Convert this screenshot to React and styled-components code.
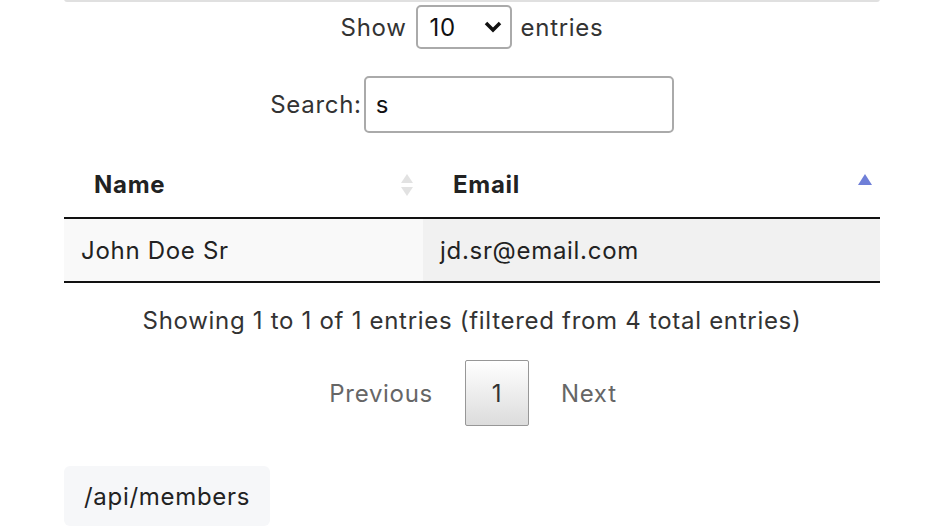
import styled, { createGlobalStyle } from "styled-components";

const GlobalStyle = createGlobalStyle`
  body {
    margin: 0;
    background: #fff;
    font-family: Inter, "Noto Sans", sans-serif;
    letter-spacing: 0.7px;
    color: #333;
  }
`;

const Page = styled.div`
  width: 816px;
  margin-left: 64px;
  display: flex;
  flex-direction: column;
`;

const PrevPanel = styled.div`
  height: 1px;
  border: 2px solid #e0e0e0;
  border-top: none;
  border-radius: 0 0 8px 8px;
  margin-top: -1px;
`;

const Row = styled.div`
  display: flex;
  justify-content: center;
  align-items: center;
  gap: ${(p) => p.gap || 8}px;
  font-size: 24px;
  color: #333;
`;

const Select = styled.div`
  width: 96px;
  height: 44px;
  box-sizing: border-box;
  border: 2px solid #aaa;
  border-radius: 5px;
  display: flex;
  align-items: center;
  justify-content: space-between;
  padding: 0 8px 0 12px;
  color: #111;
  font-size: 24px;
`;

const SearchInput = styled.div`
  width: 310px;
  height: 57px;
  box-sizing: border-box;
  border: 2px solid #aaa;
  border-radius: 5px;
  display: flex;
  align-items: center;
  padding: 0 10px;
  color: #111;
  font-size: 24px;
`;

const Table = styled.div`
  display: grid;
  grid-template-columns: 359px 457px;
  margin-top: 19px;
  border-bottom: 2px solid #111;
`;

const Head = styled.div`
  position: relative;
  height: 67px;
  box-sizing: border-box;
  padding: 0 30px;
  display: flex;
  align-items: center;
  font-size: 24px;
  font-weight: 700;
  color: #222;
  border-bottom: 2px solid #111;
`;

const SortIcon = styled.svg`
  position: absolute;
  right: ${(p) => p.right}px;
  top: 22px;
`;

const Cell = styled.div`
  height: 62px;
  display: flex;
  align-items: center;
  padding: 0 17px;
  font-size: 24px;
  color: #222;
  background: ${(p) => (p.sorted ? "#f1f1f1" : "#f9f9f9")};
`;

const Info = styled.div`
  text-align: center;
  font-size: 24px;
  color: #333;
  margin-top: 23px;
`;

const Pager = styled.div`
  display: flex;
  justify-content: center;
  align-items: center;
  gap: 32px;
  margin-top: 25px;
  margin-left: 2px;
`;

const PageLink = styled.span`
  font-size: 24px;
  color: #666;
`;

const PageButton = styled.div`
  width: 64px;
  height: 66px;
  box-sizing: border-box;
  border: 1.5px solid #979797;
  border-radius: 2px;
  background: linear-gradient(to bottom, #fff 0%, #dcdcdc 100%);
  display: flex;
  align-items: center;
  justify-content: center;
  font-size: 24px;
  color: #333;
`;

const Code = styled.div`
  align-self: flex-start;
  margin-top: 40px;
  background: #f6f7f9;
  border-radius: 6px;
  padding: 0 20px;
  height: 60px;
  display: flex;
  align-items: center;
  font-size: 24px;
  color: #222;
`;

function BothArrows() {
  return (
    <SortIcon right={10} width="12" height="24" viewBox="0 0 12 24">
      <polygon points="6,0 12,9 0,9" fill="#e2e2e2" />
      <polygon points="6,22 12,13 0,13" fill="#e2e2e2" />
    </SortIcon>
  );
}

function UpArrow() {
  return (
    <SortIcon right={8} width="14" height="11" viewBox="0 0 14 11">
      <polygon points="7,0 14,11 0,11" fill="#6f7fd8" />
    </SortIcon>
  );
}

export default function App() {
  return (
    <>
      <GlobalStyle />
      <Page>
        <PrevPanel />
        <Row gap={9} style={{ marginTop: 3 }}>
          <span>Show</span>
          <Select>
            <span>10</span>
            <svg width="18" height="12" viewBox="0 0 18 12">
              <polyline points="2,2 9,9 16,2" fill="none" stroke="#111" strokeWidth="3.5" />
            </svg>
          </Select>
          <span>entries</span>
        </Row>
        <Row gap={2} style={{ marginTop: 27 }}>
          <span>Search:</span>
          <SearchInput>s</SearchInput>
        </Row>
        <Table>
          <Head>
            Name
            <BothArrows />
          </Head>
          <Head>
            Email
            <UpArrow />
          </Head>
          <Cell>John Doe Sr</Cell>
          <Cell sorted>jd.sr@email.com</Cell>
        </Table>
        <Info>Showing 1 to 1 of 1 entries (filtered from 4 total entries)</Info>
        <Pager>
          <PageLink>Previous</PageLink>
          <PageButton>1</PageButton>
          <PageLink>Next</PageLink>
        </Pager>
        <Code>/api/members</Code>
      </Page>
    </>
  );
}
